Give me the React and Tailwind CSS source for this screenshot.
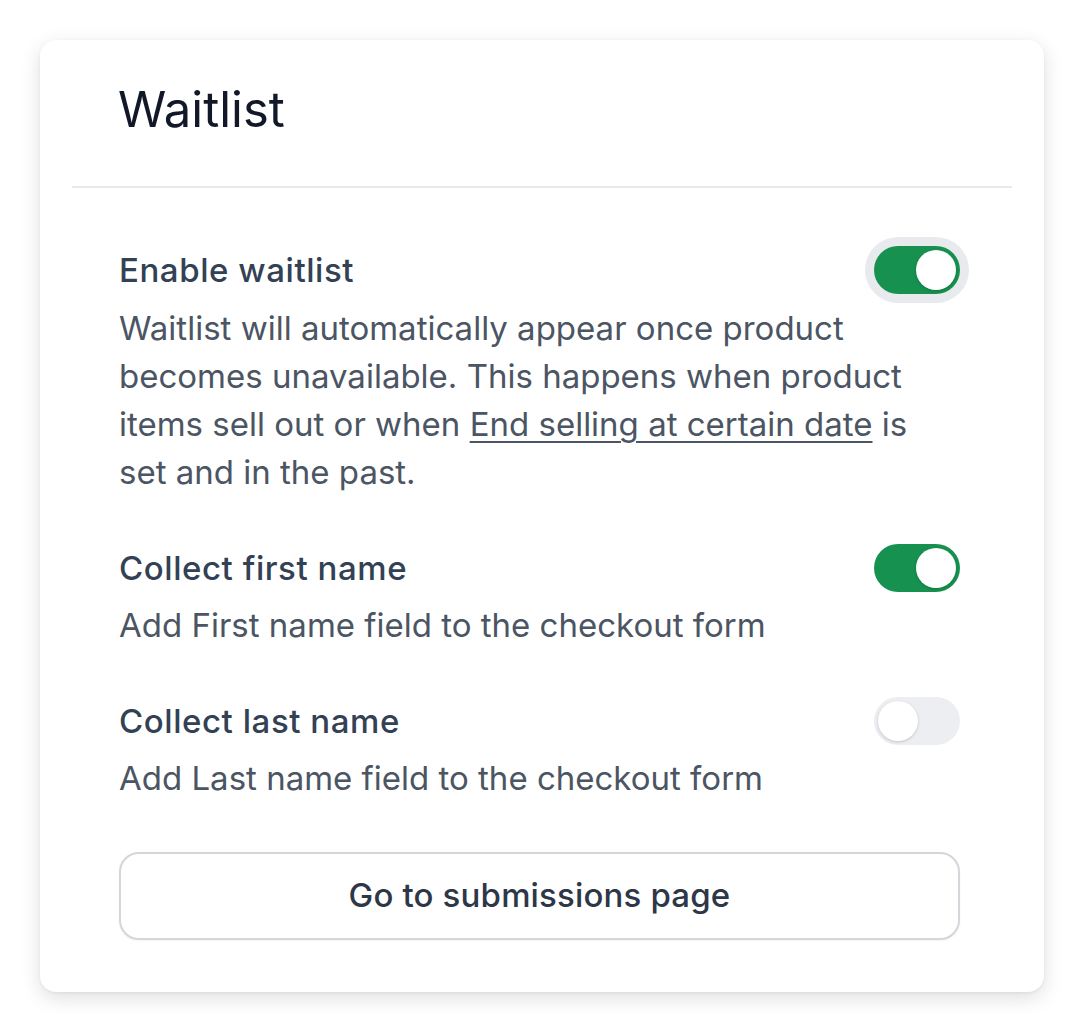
import { useState } from "react";

function Toggle({ on, focused, onClick }) {
  return (
    <button
      onClick={onClick}
      className={`relative mr-[4px] flex h-12 w-[86px] shrink-0 items-center rounded-full p-1 transition ${
        on ? "bg-[#16914f]" : "bg-[#eceef1]"
      } ${focused ? "ring-[9px] ring-[#e9eaee]" : ""}`}
    >
      <span
        className={`h-10 w-10 rounded-full bg-white shadow-[0_1px_3px_rgba(0,0,0,0.18)] transition ${
          on ? "translate-x-[38px]" : "translate-x-0"
        }`}
      />
    </button>
  );
}

export default function App() {
  const [waitlist, setWaitlist] = useState(true);
  const [firstName, setFirstName] = useState(true);
  const [lastName, setLastName] = useState(false);

  return (
    <div
      className="min-h-screen bg-white pt-10 px-10"
      style={{ fontFamily: "Inter, 'Noto Sans', sans-serif" }}
    >
      <div className="w-[1004px] rounded-[16px] bg-white px-8 pt-8 pb-[52px] shadow-[0_6px_20px_rgba(0,0,0,0.13),0_1px_3px_rgba(0,0,0,0.06)]">
        <div className="border-b-2 border-[#e8e9ec] pl-[46px] pr-12 pt-[6px] pb-[44px]">
          <h1 className="text-[49px] leading-[64px] font-normal text-[#111827]">Waitlist</h1>
        </div>

        <div className="pl-[47px] pr-12 pt-[58px]">
          <div className="flex items-center justify-between">
            <h2 className="text-[33px] leading-[48px] font-medium tracking-[0.017em] text-[#334155]">
              Enable waitlist
            </h2>
            <Toggle on={waitlist} focused onClick={() => setWaitlist(!waitlist)} />
          </div>
          <p className="mt-[10px] max-w-[800px] text-[33px] leading-[48px] text-[#4b5563]">
            Waitlist will automatically appear once product becomes unavailable. This happens when
            product items sell out or when{" "}
            <a href="#" className="underline underline-offset-[5px] decoration-2">
              End selling at certain date
            </a>{" "}
            is set and in the past.
          </p>

          <div className="mt-12 flex items-center justify-between">
            <h2 className="text-[33px] leading-[48px] font-medium tracking-[0.017em] text-[#334155]">
              Collect first name
            </h2>
            <Toggle on={firstName} onClick={() => setFirstName(!firstName)} />
          </div>
          <p className="mt-[9px] text-[33px] leading-[48px] text-[#4b5563]">
            Add First name field to the checkout form
          </p>

          <div className="mt-12 flex items-center justify-between">
            <h2 className="text-[33px] leading-[48px] font-medium tracking-[0.017em] text-[#334155]">
              Collect last name
            </h2>
            <Toggle on={lastName} onClick={() => setLastName(!lastName)} />
          </div>
          <p className="mt-[9px] text-[33px] leading-[48px] text-[#4b5563]">
            Add Last name field to the checkout form
          </p>

          <button className="mt-[50px] mr-[4px] flex h-[88px] w-[841px] items-center justify-center rounded-[20px] border-2 border-[#d4d6db] bg-white text-[33px] font-medium tracking-[0.005em] text-[#2d3748] shadow-[0_1px_2px_rgba(0,0,0,0.05)]">
            Go to submissions page
          </button>
        </div>
      </div>
    </div>
  );
}
